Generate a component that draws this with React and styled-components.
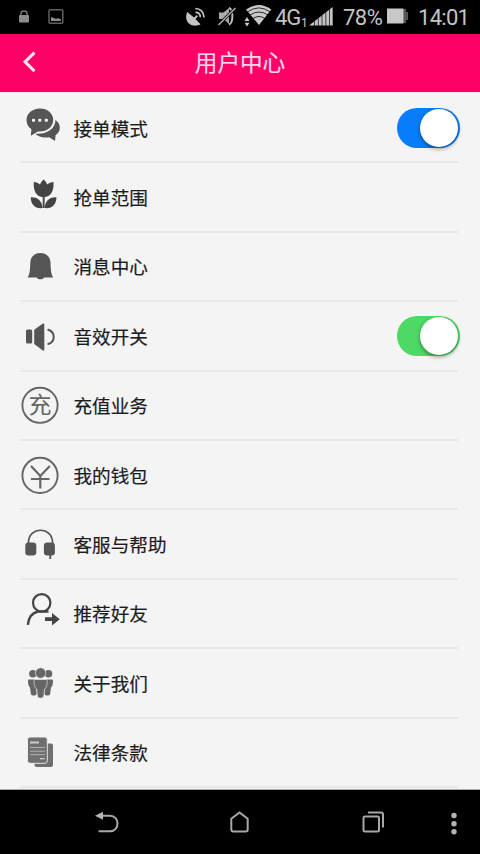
import React from 'react';
import styled, { createGlobalStyle } from 'styled-components';

const GlobalStyle = createGlobalStyle`
  * { box-sizing: border-box; }
  body { margin: 0; background: #000; }
`;

const Screen = styled.div`
  width: 480px;
  height: 854px;
  display: flex;
  flex-direction: column;
  overflow: hidden;
  background: #f4f4f4;
  font-family: 'Noto Sans CJK SC', sans-serif;
`;

const StatusBar = styled.div`
  height: 34px;
  flex: none;
  display: flex;
  align-items: center;
  background: #000;
  color: #c4c4c4;
  font-family: Roboto, sans-serif;
`;

const StatusIcon = styled.svg`
  flex: none;
  display: block;
  height: 34px;
  margin-left: ${(p) => p.$gap || 0}px;
`;

const StatusText = styled.span`
  flex: none;
  width: ${(p) => p.$width}px;
  margin-left: ${(p) => p.$gap}px;
  font-size: ${(p) => p.$size || 22}px;
  letter-spacing: ${(p) => p.$spacing || 0}px;
  line-height: 34px;
  padding-top: ${(p) => p.$drop || 2}px;
  white-space: nowrap;
`;

const Header = styled.header`
  height: 58px;
  flex: none;
  display: grid;
  grid-template-columns: 60px 1fr 60px;
  align-items: center;
  background: #ff0066;
`;

const BackButton = styled.button`
  height: 58px;
  padding: 0;
  border: 0;
  background: none;
  svg { display: block; }
`;

const Title = styled.h1`
  margin: 0;
  text-align: center;
  font-size: 22.6px;
  font-weight: 400;
  line-height: 54px;
  padding-bottom: 2px;
  color: #ffd9ea;
  -webkit-text-stroke: 0.2px #ffd9ea;
`;

const List = styled.main`
  flex: 1;
  min-height: 0;
  padding: 2px 22px 0 20px;
  border-bottom: 1px solid #aaa;
  box-shadow: inset 0 1px #fbe3ec;
`;

const Row = styled.div`
  height: 69.4px;
  display: flex;
  align-items: center;
  border-bottom: 2px solid #e8e8e8;
`;

const RowIcon = styled.svg`
  display: block;
  flex: none;
  width: 40px;
  height: 40px;
  color: ${(p) => p.$tone || '#555'};
`;

const Label = styled.span`
  flex: 1;
  margin-left: 13.5px;
  font-size: 18.6px;
  line-height: 28px;
  color: #1c1c1c;
  -webkit-text-stroke: 0.2px #1c1c1c;
`;

const Toggle = styled.button`
  width: 63px;
  height: 40px;
  margin-right: -2px;
  padding: 1px 2.5px;
  display: flex;
  justify-content: flex-end;
  border: 0;
  border-radius: 20px;
  background: ${(p) => p.$color};
`;

const Knob = styled.span`
  width: 38px;
  height: 38px;
  border-radius: 50%;
  background: #fff;
  box-shadow: 0 2px 4px rgba(0, 0, 0, 0.4);
`;

const NavBar = styled.nav`
  height: 64px;
  flex: none;
  display: flex;
  background: #000;
  svg { display: block; flex: none; }
`;

const ChatIcon = () => (
  <RowIcon viewBox="0 0 40 40" fill="currentColor">
    <path d="M35.500 12c3.200 2.300 4.500 5 4.300 8.200-.2 3-1.700 5.200-4.200 7l-.6 5.800-5.700-3.700c-6.500.9-11.300-.8-14-3.600 9.800 1 19.700-3.700 20.200-13.700z" />
    <path d="M19.900.4C12.400.4 6.500 5.400 6.500 12c0 4 1.800 7 4.900 9.200L10.800 27.800l7-4.300c8.800.8 15.400-4.600 15.400-11.500S27.400.4 19.900.4z" />
    <g fill="#f4f4f4">
      <rect x="12" y="10.800" width="3" height="3" rx=".8" />
      <rect x="18.300" y="10.800" width="3" height="3" rx=".8" />
      <rect x="24.800" y="10.800" width="3" height="3" rx=".8" />
    </g>
  </RowIcon>
);

const FlowerIcon = () => (
  <RowIcon viewBox="0 0 40 40" fill="currentColor" $tone="#444">
    <path d="M23.600 2.400c2 1.600 3 3.500 3.700 5.200 1.700-1.500 3.800-2.100 6.200-2.500.5 8.400-2.200 15-9.900 15.200-7.600-.2-10.400-6.800-9.800-15.200 2.400.4 4.500 1 6.200 2.500.6-1.700 1.700-3.600 3.600-5.200z" />
    <path d="M22.700 19h1.900v12h-1.900z" />
    <path d="M10.800 20.200c6.800-.6 11.500 4 11.800 10.900C15 32 10.600 27 10.800 20.200zM36.400 20.200c-6.800-.6-11.500 4-11.800 10.900 7.600.9 12-4.100 11.800-10.900z" />
  </RowIcon>
);

const BellIcon = () => (
  <RowIcon viewBox="0 0 40 40" fill="currentColor">
    <path d="M20.400 7c6.100 0 9.800 4 10.100 9.500.3 6.500.2 11 2.700 14.900H24c-1 2.600-6.200 2.600-7.200 0H7.700c2.500-3.900 2.300-8.400 2.600-14.900C10.600 11 14.300 7 20.400 7z" />
  </RowIcon>
);

const SpeakerIcon = () => (
  <RowIcon viewBox="0 0 40 40" fill="currentColor">
    <rect x="6" y="13.600" width="6.200" height="13.800" rx="1.500" />
    <path d="M14.200 13.800 22.500 7.800q1.800-1 1.800 1v24.500q0 2-1.800 1L14.200 28z" />
    <path d="M28.300 13.800c7.200 2.600 7.200 11.600 0 14.200" fill="none" stroke="currentColor" strokeWidth="2" strokeLinecap="round" />
  </RowIcon>
);

const RechargeIcon = () => (
  <RowIcon viewBox="0 0 40 40" $tone="#666">
    <circle cx="20" cy="20.300" r="17.600" fill="none" stroke="currentColor" strokeWidth="1.900" />
    <text x="20" y="28.300" fontSize="23" textAnchor="middle" fill="currentColor" fontFamily="'Noto Sans CJK SC', sans-serif">充</text>
  </RowIcon>
);

const WalletIcon = () => (
  <RowIcon viewBox="0 0 40 40" fill="none" stroke="currentColor" $tone="#666">
    <circle cx="20" cy="20.400" r="17.600" strokeWidth="1.900" />
    <path d="M11 11 20.300 21 29.800 11M20.300 21v12.400M11 24H29.500" strokeWidth="2.200" />
  </RowIcon>
);

const HeadphonesIcon = () => (
  <RowIcon viewBox="0 0 40 40" fill="currentColor">
    <path d="M8.400 20v-1c0-17 24.200-17 24.200 0v1" fill="none" stroke="currentColor" strokeWidth="1.700" />
    <rect x="5.300" y="18.600" width="11" height="13" rx="3.300" />
    <rect x="23.900" y="18.600" width="11" height="13" rx="3.300" />
    <path d="M29.300 30h1.900v5h-1.900z" />
  </RowIcon>
);

const ReferIcon = () => (
  <RowIcon viewBox="0 0 40 40" fill="none" stroke="currentColor" $tone="#444">
    <circle cx="21.700" cy="9.800" r="8.700" strokeWidth="2.200" />
    <path d="M7.800 31.800C8.600 24.700 12 19.800 18 18.500h10.500" strokeWidth="2.400" />
    <path d="M25 24.200h7v-4.300l7.800 6.300-7.800 6.200v-4.300h-7z" fill="currentColor" stroke="none" />
  </RowIcon>
);

const PeopleIcon = () => (
  <RowIcon viewBox="0 0 40 40" fill="currentColor" $tone="#666">
    <circle cx="12.900" cy="10.800" r="3.800" />
    <circle cx="28.500" cy="10.800" r="3.800" />
    <path d="M8 17.500q0-1 1-1h6l1.800 14q-.3 2-2.300 2h-1.800q-1.700 0-1.900-2L10 24.500q-2-1.500-2-7zM33 17.500q0-1-1-1h-6l-1.800 14q.3 2 2.300 2h1.800q1.700 0 1.900-2l.8-6q2-1.500 2-7z" />
    <circle cx="20.600" cy="10" r="5.200" stroke="#f4f4f4" strokeWidth=".6" />
    <path d="M14.200 16.500h12.800q.8 7-2.600 10l-.6 6.700q-.5 2-3.200 2t-3.200-2l-.6-6.700q-3.400-3-2.600-10z" stroke="#f4f4f4" strokeWidth=".6" />
  </RowIcon>
);

const DocumentIcon = () => (
  <RowIcon viewBox="0 0 40 40" fill="currentColor" $tone="#707070">
    <path d="M14 11.500h17q2 0 2 2v19.500q0 2-2 2H16.500q-2 0-2-2z" />
    <rect x="7.500" y="5" width="19.800" height="26.300" rx="2.500" stroke="#f4f4f4" strokeWidth=".9" />
    <g fill="#ccc">
      <rect x="10" y="9.500" width="9" height="2" />
      <rect x="10" y="15.200" width="14.800" height=".7" />
      <rect x="10" y="18.800" width="14.800" height=".7" />
      <rect x="10" y="22.400" width="14.800" height=".7" />
      <rect x="20" y="26" width="4.700" height="1.300" />
    </g>
  </RowIcon>
);

const items = [
  { label: '接单模式', Icon: ChatIcon, toggle: '#087dfa' },
  { label: '抢单范围', Icon: FlowerIcon },
  { label: '消息中心', Icon: BellIcon },
  { label: '音效开关', Icon: SpeakerIcon, toggle: '#4cd964' },
  { label: '充值业务', Icon: RechargeIcon },
  { label: '我的钱包', Icon: WalletIcon },
  { label: '客服与帮助', Icon: HeadphonesIcon },
  { label: '推荐好友', Icon: ReferIcon },
  { label: '关于我们', Icon: PeopleIcon },
  { label: '法律条款', Icon: DocumentIcon },
];

const PhoneStatus = () => (
  <StatusBar>
    <StatusIcon $gap={18} width="12" viewBox="0 0 12 34">
      <rect x="1" y="15" width="10" height="7.600" rx=".8" fill="#8c8c8c" />
      <path d="M3 15.500v-2c0-3.200 6-3.200 6 0v2" fill="none" stroke="#777" strokeWidth="1.500" />
    </StatusIcon>
    <StatusIcon $gap={18} width="16" viewBox="0 0 16 34">
      <rect x="1" y="9.800" width="13.800" height="13.400" rx="1" fill="none" stroke="#606060" strokeWidth="1.500" />
      <path d="M3 21v-4l3 1 2 1 2-1 3 1.500V21z" fill="#8c8c8c" />
    </StatusIcon>
    <StatusIcon $gap={121} width="21" viewBox="0 0 21 34" fill="none" stroke="#c4c4c4">
      <path d="M2.300 12C.3 16 1 20.800 4 23.500s8 3 11.500.8L10.500 19l2.500-2.700-1.200-1.200L9 17.600z" fill="#c4c4c4" stroke="none" />
      <path d="M10.500 12.300c3 0 4.800 2 4.800 5M10.300 8.500c5 0 8.700 3.500 8.700 9" strokeWidth="1.700" />
    </StatusIcon>
    <StatusIcon $gap={11} width="20" viewBox="0 0 20 34">
      <path d="M2 12.500h4.500L12 8v16l-5.500-5H2z" fill="#aaa" />
      <path d="M12 8c4.500 1 4.500 15 0 16.500" fill="none" stroke="#bbb" strokeWidth="2" />
      <path d="M1.500 25 18.500 8" stroke="#000" strokeWidth="3" />
      <path d="M1.500 25 18.500 8" stroke="#aaa" strokeWidth="1.600" />
    </StatusIcon>
    <StatusIcon $gap={7} width="28" viewBox="0 0 28 34">
      <path d="M2 9.500Q15 .5 27.300 9.500L15 25z" fill="#c9c9c9" />
      <path d="M3.500 11.800Q15 4 26 11.800M6 15Q15 9 24 15M9 18.500q6-4 12 0" fill="none" stroke="#000" strokeWidth=".8" />
      <path d="m.5 21 2.500-4 2.500 4zM.5 22.800h5l-2.500 3.700z" fill="#c9c9c9" />
    </StatusIcon>
    <StatusText $gap={3} $width={26} $spacing={-1.200}>4G</StatusText>
    <StatusText $gap={0} $width={7} $size={12} $drop={11}>1</StatusText>
    <StatusIcon width="26" viewBox="0 0 26 34">
      <path d="M1 25.500 24.700 7v18.500z" fill="#c4c4c4" />
      <path d="M6.500 8v18M10.300 8v18M14 8v18M17.800 8v18M21.500 6v20" stroke="#000" strokeWidth=".7" />
    </StatusIcon>
    <StatusText $gap={9} $width={42} $spacing={-0.500}>78%</StatusText>
    <StatusIcon $gap={1} width="24" viewBox="0 0 24 34">
      <path d="M17 9h3v3h2v8h-2v3h-3z" fill="#555" />
      <rect x="1" y="8.500" width="16.500" height="15" fill="#c8c8c8" />
    </StatusIcon>
    <StatusText $gap={8} $width={56} $spacing={-0.700}>14:01</StatusText>
  </StatusBar>
);

export default function App() {
  return (
    <Screen>
      <GlobalStyle />
      <PhoneStatus />
      <Header>
        <BackButton aria-label="返回">
          <svg width="60" height="58" viewBox="0 0 60 58">
            <path d="M34.500 18.700 25 27.800l9.500 9.300" fill="none" stroke="#ffe6f1" strokeWidth="3" />
          </svg>
        </BackButton>
        <Title>用户中心</Title>
      </Header>
      <List>
        {items.map(({ label, Icon, toggle }) => (
          <Row key={label}>
            <Icon />
            <Label>{label}</Label>
            {toggle && (
              <Toggle $color={toggle} role="switch" aria-checked="true" aria-label={label}>
                <Knob />
              </Toggle>
            )}
          </Row>
        ))}
      </List>
      <NavBar>
        <svg width="480" height="64" viewBox="0 0 480 64" fill="none" stroke="#a8a8a8" strokeWidth="2">
          <path d="M98.500 41.300h11.500c10 0 10-15.600 0-15.600h-8" />
          <path d="m95 25.700 8-4v8z" fill="#b4b4b4" stroke="none" />
          <path d="M231.300 39.500V28.700l8.200-6.200 8.200 6.200v10.800q0 2-2 2h-12.400q-2 0-2-2z" />
          <rect x="363.500" y="26.500" width="15.500" height="15" rx="1.500" />
          <path d="M368 22.500h13q2 0 2 2V37.500" />
          <g fill="#b4b4b4" stroke="none">
            <circle cx="454" cy="25.500" r="2.700" />
            <circle cx="454" cy="33.700" r="2.700" />
            <circle cx="454" cy="41.700" r="2.700" />
          </g>
        </svg>
      </NavBar>
    </Screen>
  );
}
